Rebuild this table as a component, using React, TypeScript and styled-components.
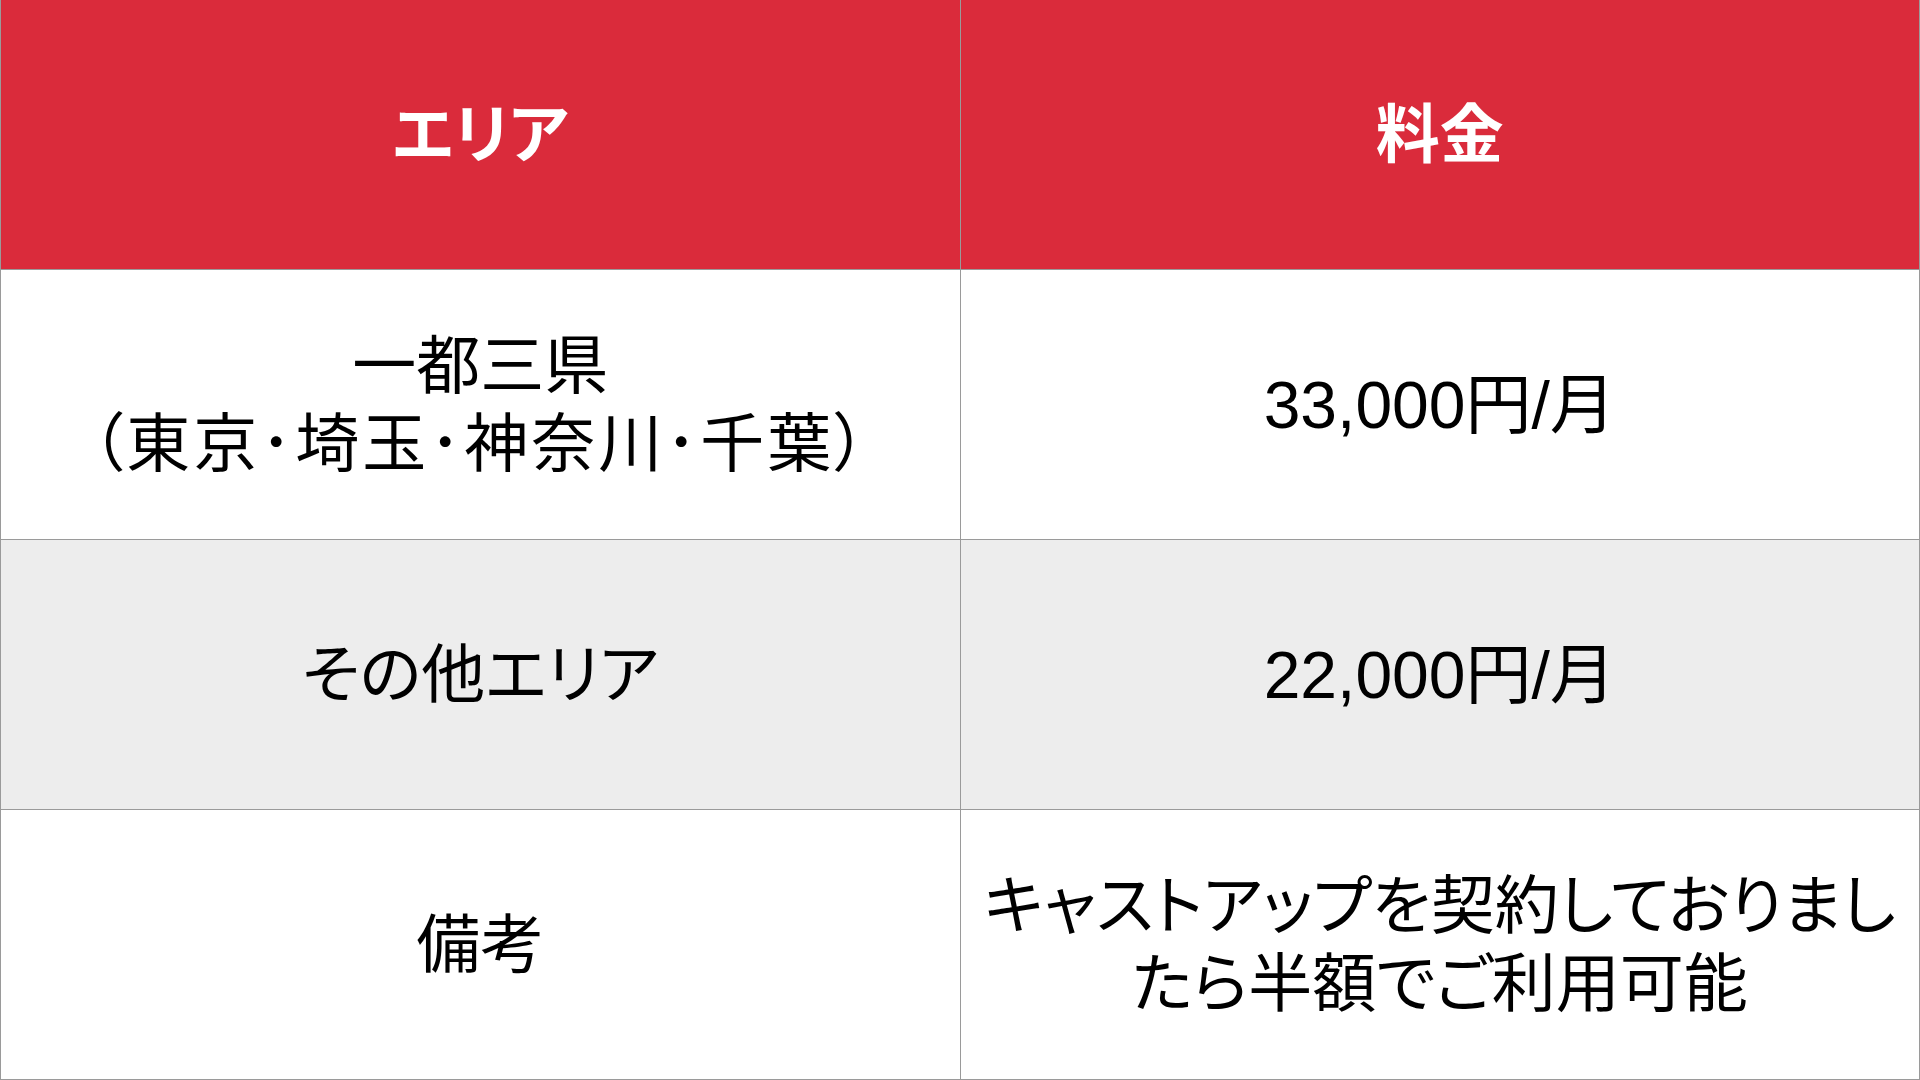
import React from 'react';
import styled, { createGlobalStyle, css } from 'styled-components';

const GlobalStyle = createGlobalStyle`
  html, body {
    margin: 0;
    padding: 0;
    background: #ffffff;
  }
  body {
    font-family: 'Liberation Sans', 'Noto Sans CJK JP', sans-serif;
  }
`;

const Table = styled.div`
  display: grid;
  grid-template-columns: 1fr 1fr;
  grid-auto-rows: 270px;
  width: 1920px;
  height: 1080px;
  box-sizing: border-box;
  border-left: 1px solid #9a9a9a;
`;

type Tone = 'head' | 'white' | 'gray';

const Cell = styled.div<{ $tone: Tone }>`
  display: flex;
  align-items: center;
  justify-content: center;
  text-align: center;
  box-sizing: border-box;
  padding: 0 16px;
  border-right: 1px solid #9a9a9a;
  border-bottom: 1px solid #9a9a9a;
  font-size: 64px;
  line-height: 78px;
  color: #000000;
  font-feature-settings: 'palt';

  ${props =>
    props.$tone === 'head'
      ? css`
          background: #da2b3b;
          color: #ffffff;
          font-weight: 700;
        `
      : props.$tone === 'gray'
      ? css`
          background: #ededed;
        `
      : css`
          background: #ffffff;
        `}
`;

const Price = styled.div`
  font-size: 66px;
`;

const Spaced = styled.span`
  letter-spacing: 3px;
`;

const rows: { area: React.ReactNode; price: React.ReactNode; tone: Tone }[] = [
  {
    area: (
      <>
        一都三県
        <br />
        <Spaced>（東京･埼玉･神奈川･千葉）</Spaced>
      </>
    ),
    price: <Price>33,000円/月</Price>,
    tone: 'white'
  },
  { area: 'その他エリア', price: <Price>22,000円/月</Price>, tone: 'gray' },
  {
    area: '備考',
    price: (
      <>
        キャストアップを契約しておりまし
        <br />
        たら半額でご利用可能
      </>
    ),
    tone: 'white'
  }
];

const App: React.FC = () => {
  return (
    <>
      <GlobalStyle />
      <Table>
        <Cell $tone="head">エリア</Cell>
        <Cell $tone="head">料金</Cell>
        {rows.map((row, i) => (
          <React.Fragment key={i}>
            <Cell $tone={row.tone}>
              <div>{row.area}</div>
            </Cell>
            <Cell $tone={row.tone}>
              <div>{row.price}</div>
            </Cell>
          </React.Fragment>
        ))}
      </Table>
    </>
  );
};

export default App;
